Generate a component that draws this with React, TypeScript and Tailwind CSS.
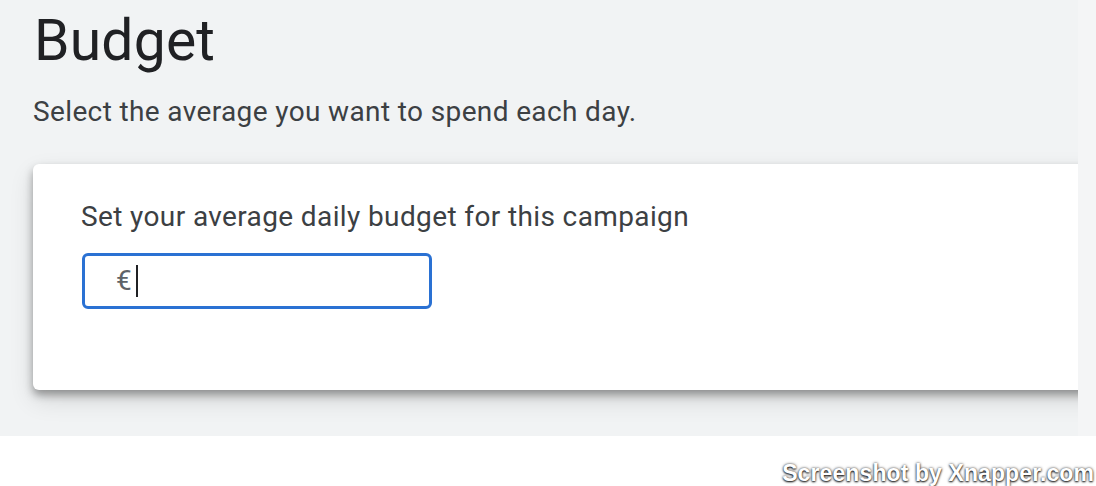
export default function App() {
  return (
    <div className="relative w-[1096px] h-[486px] overflow-hidden bg-white font-['Roboto',sans-serif]">
      <div className="flex h-[436px]">
        <div className="w-[1078px] overflow-hidden bg-[#f1f3f4] pl-[33px] pt-[12px]">
          <h1 className="text-[57px] leading-[57px] tracking-[0.2px] text-[#202124] font-normal pl-[1px]">Budget</h1>
          <p className="mt-[27px] text-[28px] leading-[32px] tracking-[0.37px] text-[#3c4043]">
            Select the average you want to spend each day.
          </p>
          <div className="mt-[36px] -mr-8 h-[226px] rounded-md bg-white shadow-[0_5px_8px_rgba(0,0,0,0.35),0_10px_24px_rgba(0,0,0,0.12)] pl-[48px] pt-[37px]">
            <div className="text-[28px] leading-[32px] tracking-[0.38px] text-[#3c4043]">
              Set your average daily budget for this campaign
            </div>
            <div className="mt-[20px] ml-[1px] flex h-[56px] w-[350px] items-center rounded-md border-[3px] border-[#2a71d3] pl-[31px]">
              <span className="text-[28px] text-[#5f6368]">€</span>
              <span className="ml-[4px] h-[32px] w-[2px] bg-[#202124]" />
            </div>
          </div>
        </div>
        <div className="flex-1 bg-[#f4f5f6]" />
      </div>
      <div className="absolute right-[2px] top-[456px] whitespace-nowrap text-[23px] font-bold tracking-[0.1px] text-white [text-shadow:0_1px_2px_rgba(0,0,0,0.9),0_0_3px_rgba(0,0,0,0.7)] font-['Liberation_Sans',sans-serif]">
        Screenshot by Xnapper.com
      </div>
    </div>
  );
}
